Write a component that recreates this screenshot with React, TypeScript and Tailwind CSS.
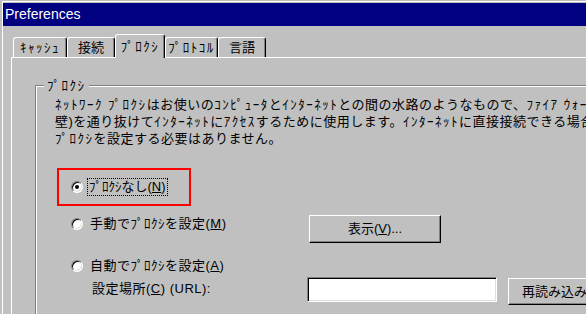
const font = "font-['Liberation_Sans','Noto_Sans_CJK_JP',sans-serif]";

// half-width katakana runs are set wider, like the old bitmap font
function K({ children }: { children: string }) {
  return <span className="tracking-[1.5px]">{children}</span>;
}

function Radio({ checked }: { checked?: boolean }) {
  return (
    <span className="w-[12px] h-[12px] shrink-0 rounded-full bg-white border border-t-[#808080] border-l-[#808080] border-b-white border-r-white shadow-[inset_1px_1px_0_#000,inset_-1px_-1px_0_#dfdfdf] flex items-center justify-center">
      {checked && <span className="w-[4px] h-[4px] rounded-full bg-black" />}
    </span>
  );
}

function Tab({ label, width, active }: { label: React.ReactNode; width: string; active?: boolean }) {
  return (
    <div
      className={
        active
          ? `${width} h-[24px] -mb-px relative z-10 bg-[#c0c0c0] border-l border-t border-white border-r border-r-black rounded-t-[3px] shadow-[inset_-1px_0_0_#808080] flex justify-center pt-[3px] leading-[17px] whitespace-nowrap`
          : `${width} h-[20px] bg-[#c0c0c0] border-l border-t border-white border-r border-r-black rounded-t-[3px] shadow-[inset_-1px_0_0_#808080] flex justify-center pt-[1px] leading-[17px] whitespace-nowrap`
      }
    >
      {label}
    </div>
  );
}

const btn =
  "bg-[#c0c0c0] border border-t-white border-l-white border-b-black border-r-black shadow-[inset_-1px_-1px_0_#808080]";

export default function App() {
  return (
    <div className={`w-[586px] h-[314px] overflow-hidden bg-[#c0c0c0] pt-px pl-[2px] text-black text-[13px] ${font}`}>
      <div className="border-l border-t border-white pt-px w-[700px] h-[400px] flex flex-col">
        <div className="h-[23px] bg-[#000080] text-white text-[14px] leading-[23px] pl-[2px]">Preferences</div>

        <div className="h-[31px] flex items-end pl-[10px]">
          <Tab label={<K>ｷｬｯｼｭ</K>} width="w-[54px]" />
          <Tab label="接続" width="w-[48px]" />
          <Tab label={<K>ﾌﾟﾛｸｼ</K>} width="w-[50px]" active />
          <Tab label={<K>ﾌﾟﾛﾄｺﾙ</K>} width="w-[53px]" />
          <Tab label="言語" width="w-[48px]" />
        </div>

        <div className="ml-[8px] flex-1 border-l border-t border-white pt-[27px] pl-[23px]">
          <div className="relative h-[300px] border-l border-t border-[#808080] shadow-[inset_1px_1px_0_#fff]">
            <span className="absolute left-[8px] -top-[9px] px-[3px] bg-[#c0c0c0] leading-[17px]">
              <K>ﾌﾟﾛｸｼ</K>
            </span>

            <div className="pt-[10px] pl-[19px] leading-[17px] whitespace-nowrap tracking-[0.5px]">
              <div>
                <K>ﾈｯﾄﾜｰｸ ﾌﾟﾛｸｼ</K>はお使いの<K>ｺﾝﾋﾟｭｰﾀ</K>と<K>ｲﾝﾀｰﾈｯﾄ</K>との間の水路のようなもので、<K>ﾌｧｲｱ ｳｫｰﾙ</K>(防火
              </div>
              <div>
                壁)を通り抜けて<K>ｲﾝﾀｰﾈｯﾄ</K>に<K>ｱｸｾｽ</K>するために使用します。<K>ｲﾝﾀｰﾈｯﾄ</K>に直接接続できる場合は
              </div>
              <div>
                <K>ﾌﾟﾛｸｼ</K>を設定する必要はありません。
              </div>
            </div>

            <div className="mt-[21px] ml-[21px] w-[134px] h-[38px] border-2 border-[#ff0000] flex items-center pl-[12px]">
              <Radio checked />
              <span className="ml-[4px] h-[18px] leading-[16px] px-[1px] border border-dotted border-black whitespace-nowrap">
                ﾌﾟﾛｸｼなし(<span className="underline">N</span>)
              </span>
            </div>

            <div className="mt-[9px] flex items-start">
              <div className="w-[273px] h-[18px] flex items-center pl-[35px]">
                <Radio />
                <span className="ml-[7px] tracking-[0.5px] whitespace-nowrap">
                  手動でﾌﾟﾛｸｼを設定(<span className="underline">M</span>)
                </span>
              </div>
              <button className={`${btn} w-[132px] h-[28px] leading-[24px] text-center`}>
                表示(<span className="underline">V</span>)...
              </button>
            </div>

            <div className="mt-[14px] h-[18px] flex items-center pl-[35px]">
              <Radio />
              <span className="ml-[7px] tracking-[0.5px] whitespace-nowrap">
                自動でﾌﾟﾛｸｼを設定(<span className="underline">A</span>)
              </span>
            </div>

            <div className="mt-[2px] flex items-start">
              <div className="w-[271px] h-[25px] leading-[23px] pl-[56px] tracking-[0.5px] whitespace-nowrap">
                設定場所(<span className="underline">C</span>) (URL):
              </div>
              <div className="w-[190px] h-[25px] bg-white border border-t-[#808080] border-l-[#808080] border-b-white border-r-white shadow-[inset_1px_1px_0_#000,inset_-1px_-1px_0_#dfdfdf]" />
              <button className={`${btn} ml-[11px] mt-px w-[90px] h-[27px] leading-[23px] text-left pl-[13px] whitespace-nowrap`}>
                再読み込み
              </button>
            </div>
          </div>
        </div>
      </div>
    </div>
  );
}
